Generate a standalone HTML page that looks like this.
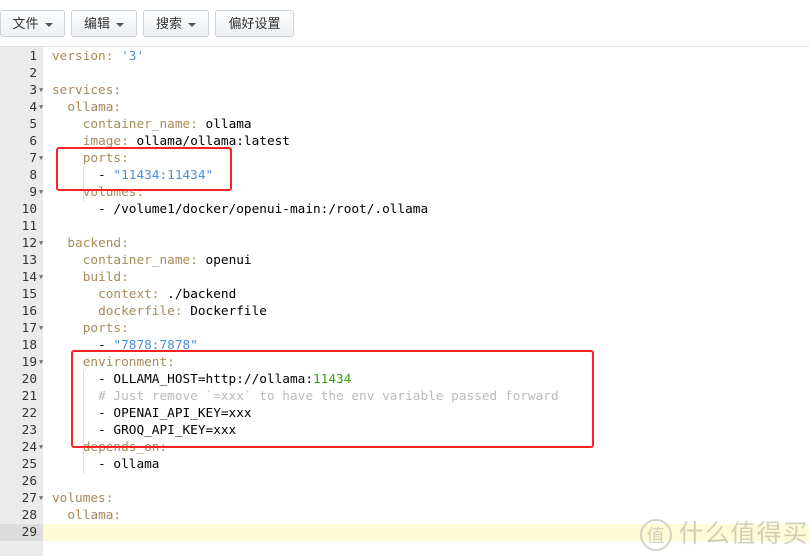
<!DOCTYPE html><html><head><style>
body{margin:0;width:809px;height:556px;overflow:hidden;background:#fff;font-family:"Liberation Sans","Noto Sans CJK SC",sans-serif;position:relative}
.tb{position:absolute;top:0;left:0;width:809px;height:46px;background:#fff;border-bottom:1px solid #dde3ea}
.b{position:absolute;top:10px;height:25px;border:1px solid #ccd3db;border-radius:3px;background:linear-gradient(#fbfcfd,#eef1f4);font-size:13px;color:#333;line-height:25px;text-align:center}
.b i{display:inline-block;border-left:4px solid transparent;border-right:4px solid transparent;border-top:4px solid #555;vertical-align:middle;margin-left:6px}
.g{position:absolute;left:0;top:47px;width:43px;height:509px;background:#ebebeb}
.ed{position:absolute;left:0;top:48px;width:809px;font-family:"DejaVu Sans Mono","Liberation Mono",monospace;font-size:12.75px}
.r{height:17px;line-height:17px;position:relative;white-space:pre;color:#000}
.n{position:absolute;left:0;width:37px;text-align:right;color:#333}
.f{position:absolute;left:39px;top:0;font-size:7px;color:#777}
.c{position:absolute;left:52px}
.k{color:#a88a5a}.s{color:#4a8fd6}.m{color:#3aa012}.cm{color:#bbb}
.hl{background:#fefbd6}
.hl .n{background:#dcdcdc;width:43px;padding-right:6px;box-sizing:border-box}
.box{position:absolute;border:2.5px solid #f22;border-radius:3px}
.ig{position:absolute;width:1px;background:#ddd}
</style></head><body>
<div class="tb">
<div class="b" style="left:0;width:63px">文件<i></i></div>
<div class="b" style="left:71px;width:64px">编辑<i></i></div>
<div class="b" style="left:143px;width:64px">搜索<i></i></div>
<div class="b" style="left:215px;width:77px">偏好设置</div>
</div>
<div class="g"></div>
<div class="ed">
<div class="r"><span class="n">1</span><span class="c"><span class="k">version:</span> <span class="s">'3'</span></span></div>
<div class="r"><span class="n">2</span></div>
<div class="r"><span class="n">3</span><span class="f">▼</span><span class="c"><span class="k">services:</span></span></div>
<div class="r"><span class="n">4</span><span class="f">▼</span><span class="c">  <span class="k">ollama:</span></span></div>
<div class="r"><span class="n">5</span><span class="c">    <span class="k">container_name:</span> ollama</span></div>
<div class="r"><span class="n">6</span><span class="c">    <span class="k">image:</span> ollama/ollama:latest</span></div>
<div class="r"><span class="n">7</span><span class="f">▼</span><span class="c">    <span class="k">ports:</span></span></div>
<div class="r"><span class="n">8</span><span class="c">      - <span class="s">"11434:11434"</span></span></div>
<div class="r"><span class="n">9</span><span class="f">▼</span><span class="c">    <span class="k">volumes:</span></span></div>
<div class="r"><span class="n">10</span><span class="c">      - /volume1/docker/openui-main:/root/.ollama</span></div>
<div class="r"><span class="n">11</span></div>
<div class="r"><span class="n">12</span><span class="f">▼</span><span class="c">  <span class="k">backend:</span></span></div>
<div class="r"><span class="n">13</span><span class="c">    <span class="k">container_name:</span> openui</span></div>
<div class="r"><span class="n">14</span><span class="f">▼</span><span class="c">    <span class="k">build:</span></span></div>
<div class="r"><span class="n">15</span><span class="c">      <span class="k">context:</span> ./backend</span></div>
<div class="r"><span class="n">16</span><span class="c">      <span class="k">dockerfile:</span> Dockerfile</span></div>
<div class="r"><span class="n">17</span><span class="f">▼</span><span class="c">    <span class="k">ports:</span></span></div>
<div class="r"><span class="n">18</span><span class="c">      - <span class="s">"7878:7878"</span></span></div>
<div class="r"><span class="n">19</span><span class="f">▼</span><span class="c">    <span class="k">environment:</span></span></div>
<div class="r"><span class="n">20</span><span class="c">      - OLLAMA_HOST=http://ollama:<span class="m">11434</span></span></div>
<div class="r"><span class="n">21</span><span class="c">      <span class="cm"># Just remove `=xxx` to have the env variable passed forward</span></span></div>
<div class="r"><span class="n">22</span><span class="c">      - OPENAI_API_KEY=xxx</span></div>
<div class="r"><span class="n">23</span><span class="c">      - GROQ_API_KEY=xxx</span></div>
<div class="r"><span class="n">24</span><span class="f">▼</span><span class="c">    <span class="k">depends_on:</span></span></div>
<div class="r"><span class="n">25</span><span class="c">      - ollama</span></div>
<div class="r"><span class="n">26</span></div>
<div class="r"><span class="n">27</span><span class="f">▼</span><span class="c"><span class="k">volumes:</span></span></div>
<div class="r"><span class="n">28</span><span class="c">  <span class="k">ollama:</span></span></div>
<div class="r hl"><span class="n">29</span></div>
</div>
<div class="ig" style="left:83px;top:167px;height:34px"></div>
<div class="ig" style="left:83px;top:371px;height:102px"></div>
<div class="box" style="left:56px;top:147px;width:172px;height:40px"></div>
<div class="box" style="left:71px;top:350px;width:519px;height:94px"></div>
<div style="position:absolute;left:640px;top:514px;font-size:25px;color:rgba(190,190,170,.7);font-family:'Noto Sans CJK SC',sans-serif;letter-spacing:1px"><span style="display:inline-block;width:28px;height:28px;border:2px solid rgba(200,200,190,.8);border-radius:50%;font-size:18px;text-align:center;line-height:28px;vertical-align:middle">值</span> 什么值得买</div>
</body></html>
